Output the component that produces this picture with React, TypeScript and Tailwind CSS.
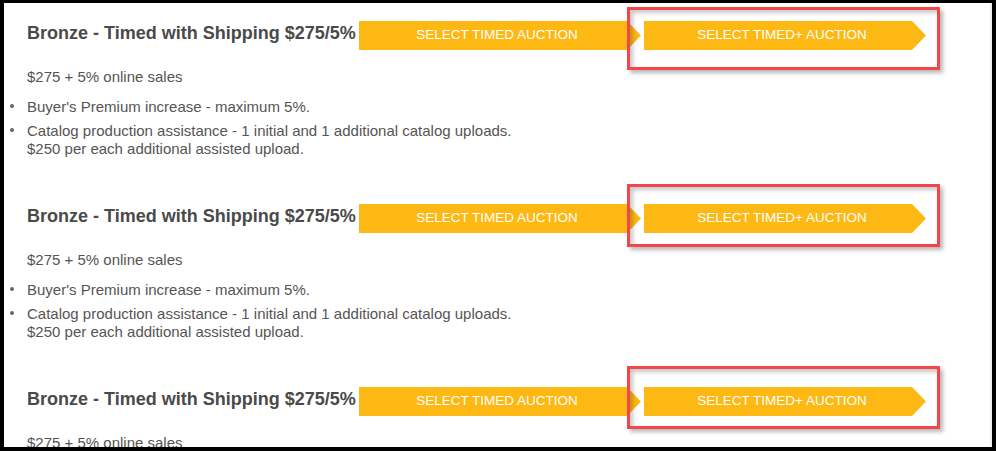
import React from "react";

type Plan = {
  title: string;
  price: string;
  bullets: string[][];
};

const plan: Plan = {
  title: "Bronze - Timed with Shipping $275/5%",
  price: "$275 + 5% online sales",
  bullets: [
    ["Buyer's Premium increase - maximum 5%."],
    [
      "Catalog production assistance - 1 initial and 1 additional catalog uploads.",
      "$250 per each additional assisted upload.",
    ],
  ],
};

const FONT = { fontFamily: '"Liberation Sans", Arial, Helvetica, sans-serif' };

// frame offsets per block (hand-drawn highlight, not perfectly aligned)
const frameTop = ["-top-[14px]", "-top-[20px]", "-top-[21px]"];

function ArrowButton({ label }: { label: string }) {
  return (
    <button
      type="button"
      className="flex h-[29px] w-[282px] shrink-0 items-center justify-center bg-[#fdb813] pb-[2px] pr-[6px] text-[13.5px] leading-[29px] text-white [clip-path:polygon(0_0,calc(100%_-_14px)_0,100%_50%,calc(100%_-_14px)_100%,0_100%)]"
    >
      {label}
    </button>
  );
}

function PlanBlock({ item, index }: { item: Plan; index: number }) {
  return (
    <section className={index === 0 ? "pt-[18px]" : "pt-[46px]"}>
      <div className="flex h-[29px] items-start">
        <h2 className="mt-[1px] w-[332px] shrink-0 whitespace-nowrap text-[18px] font-bold leading-[22px] text-[#4a4a4a]">
          {item.title}
        </h2>
        <div className="flex gap-[3px]">
          <ArrowButton label="SELECT TIMED AUCTION" />
          <div className="relative">
            <ArrowButton label="SELECT TIMED+ AUCTION" />
            {/* highlight frame around the Timed+ option */}
            <div
              className={`pointer-events-none absolute -left-[17px] ${frameTop[index]} z-10 h-[63px] w-[313px] border-[3px] border-[#f2474a] shadow-[3px_3px_4px_rgba(0,0,0,0.28),inset_3px_3px_4px_rgba(0,0,0,0.22)]`}
            />
          </div>
        </div>
      </div>

      <p className="mt-[18px] text-[15px] leading-[18px] text-[#555]">{item.price}</p>

      <ul className="-ml-[17px] mt-[12px] flex flex-col gap-[6px] text-[15px] leading-[18px] text-[#555]">
        {item.bullets.map((lines, i) => (
          <li key={i} className="flex items-start">
            <span className="mr-[13px] mt-[6px] h-[4px] w-[4px] shrink-0 rounded-full bg-[#666]" />
            <span className="flex flex-col">
              {lines.map((l) => (
                <span key={l}>{l}</span>
              ))}
            </span>
          </li>
        ))}
      </ul>
    </section>
  );
}

export default function App() {
  return (
    <div
      className="h-[451px] w-[996px] overflow-hidden border-b-4 border-l-4 border-r-4 border-t-[3px] border-black bg-white"
      style={FONT}
    >
      <div className="h-full border-r-2 border-[#eeeeee] pl-[23px]">
        {[0, 1, 2].map((i) => (
          <PlanBlock key={i} item={plan} index={i} />
        ))}
      </div>
    </div>
  );
}
